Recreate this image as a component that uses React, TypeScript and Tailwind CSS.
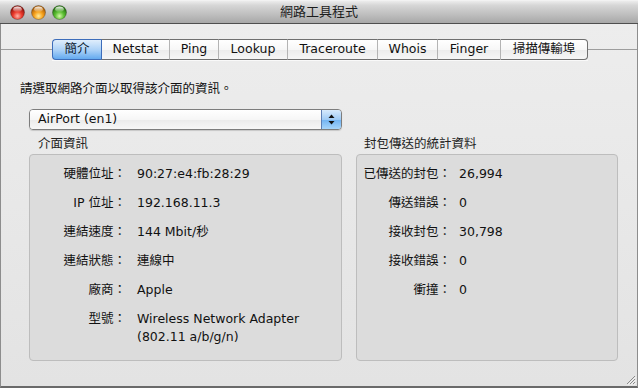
import React from "react";

const tabs = [
  { label: "簡介", w: "w-[49px]" },
  { label: "Netstat", w: "w-[68px]" },
  { label: "Ping", w: "w-[49px]" },
  { label: "Lookup", w: "w-[69px]" },
  { label: "Traceroute", w: "w-[90px]" },
  { label: "Whois", w: "w-[60px]" },
  { label: "Finger", w: "w-[63px]" },
  { label: "掃描傳輸埠", w: "w-[88px]" },
];

const ifaceRows: [string, string[]][] = [
  ["硬體位址：", ["90:27:e4:fb:28:29"]],
  ["IP 位址：", ["192.168.11.3"]],
  ["連結速度：", ["144 Mbit/秒"]],
  ["連結狀態：", ["連線中"]],
  ["廠商：", ["Apple"]],
  ["型號：", ["Wireless Network Adapter", "(802.11 a/b/g/n)"]],
];

const statRows: [string, string][] = [
  ["已傳送的封包：", "26,994"],
  ["傳送錯誤：", "0"],
  ["接收封包：", "30,798"],
  ["接收錯誤：", "0"],
  ["衝撞：", "0"],
];

function Light({ id, hi, mid, lo }: { id: string; hi: string; mid: string; lo: string }) {
  return (
    <svg width="15" height="15" viewBox="0 0 15 15">
      <defs>
        <radialGradient id={id} cx="50%" cy="75%" r="62%">
          <stop offset="0%" stopColor={hi} />
          <stop offset="50%" stopColor={mid} />
          <stop offset="100%" stopColor={lo} />
        </radialGradient>
        <linearGradient id={id + "h"} x1="0" y1="0" x2="0" y2="1">
          <stop offset="0%" stopColor="#fff" stopOpacity="0.95" />
          <stop offset="100%" stopColor="#fff" stopOpacity="0.05" />
        </linearGradient>
      </defs>
      <circle cx="7.5" cy="7.5" r="7" fill={`url(#${id})`} stroke="#00000066" strokeWidth="0.6" />
      <ellipse cx="7.5" cy="4.2" rx="4.3" ry="2.8" fill={`url(#${id}h)`} />
    </svg>
  );
}

function Segmented() {
  return (
    <div className="flex h-[21px] shadow-[0_1px_0_rgba(255,255,255,0.7)]">
      {tabs.map((t, i) => {
        const sel = i === 0;
        const last = i === tabs.length - 1;
        return (
          <div
            key={t.label}
            className={`${t.w} flex items-center justify-center text-[12.5px] leading-none border-y ${
              sel
                ? "border-[#3d6dba] border-l rounded-l-[4px] bg-[linear-gradient(to_bottom,#e0eefc,#a9d0f7_55%,#64aaf0)] text-[#0d1a2e]"
                : "border-[#6f6f6f] bg-[linear-gradient(to_bottom,#ffffff,#f7f7f7_50%,#ececec_52%,#f6f6f6)] text-[#111]"
            } ${i === 1 ? "border-l border-l-[#3d6dba]" : ""} ${i > 1 ? "border-l border-l-[#b4b4b4]" : ""} ${
              last ? "border-r rounded-r-[4px]" : ""
            }`}
          >
            {t.label}
          </div>
        );
      })}
    </div>
  );
}

export default function App() {
  return (
    <div className="w-[638px] h-[388px] flex flex-col overflow-hidden font-['DejaVu_Sans','Noto_Sans_CJK_TC',sans-serif] text-[#111] bg-[#e8e8e8]">
      {/* title bar */}
      <div className="h-[24px] shrink-0 flex items-center border-b border-[#4f4f4f] bg-[linear-gradient(to_bottom,#ececec,#d6d6d6_20%,#a8a8a8)] border-t border-t-[#f2f2f2]">
        <div className="flex items-center gap-[6px] pl-[10px]">
          <Light id="r" hi="#ffb4a8" mid="#ec3a2c" lo="#961710" />
          <Light id="o" hi="#ffec9c" mid="#f7a21c" lo="#b0620a" />
          <Light id="g" hi="#d5f8a8" mid="#5cbf33" lo="#2a7a14" />
        </div>
        <div className="flex-1 text-center text-[13px] text-[#1c1c1c] pr-[67px]">網路工具程式</div>
      </div>

      {/* body */}
      <div className="flex-1 flex flex-col border-l border-r border-b-2 border-[#8d8d8d] border-b-[#6a6a6a] bg-[linear-gradient(to_bottom,#ededed,#e3e3e3)]">
        <div className="flex items-center mt-[15px]">
          <div className="w-[51px] h-px bg-[#9d9d9d]" />
          <Segmented />
          <div className="flex-1 h-px bg-[#9d9d9d]" />
        </div>

        <div className="pl-[19px] mt-[21px] text-[12.5px] leading-[16px]">請選取網路介面以取得該介面的資訊。</div>

        {/* popup */}
        <div className="ml-[28px] mt-[12px] w-[313px] h-[21px] flex rounded-[4px] border border-[#7d7d7d] overflow-hidden shadow-[0_1px_1px_rgba(0,0,0,0.15)]">
          <div className="flex-1 flex items-center pl-[8px] text-[12.5px] bg-[linear-gradient(to_bottom,#ffffff,#f6f6f6_50%,#ebebeb_52%,#f7f7f7)]">
            AirPort (en1)
          </div>
          <div className="w-[20px] flex items-center justify-center border-l border-[#5d7fb5] bg-[linear-gradient(to_bottom,#d7eafc,#9fcbf6_50%,#71b3f2_52%,#a6d5fb)]">
            <svg width="7" height="11" viewBox="0 0 7 11">
              <path d="M3.5 0.5 L6.5 4 L0.5 4 Z" fill="#111" />
              <path d="M3.5 10.5 L6.5 7 L0.5 7 Z" fill="#111" />
            </svg>
          </div>
        </div>

        <div className="flex gap-[14px] ml-[28px] mt-[6px]">
          {/* left group */}
          <div className="w-[313px] flex flex-col">
            <div className="pl-[9px] text-[12.5px] leading-[16px] text-[#222] mb-[2px]">介面資訊</div>
            <div className="h-[207px] rounded-[4px] border border-[#bdbdbd] bg-[#dcdcdc] pt-[10px] grid grid-cols-[96px_1fr] gap-x-[11px] gap-y-[11px] content-start text-[12.5px] leading-[18px]">
              {ifaceRows.map(([k, v]) => (
                <React.Fragment key={k}>
                  <div className="text-right">{k}</div>
                  <div>
                    {v.map((line) => (
                      <div key={line}>{line}</div>
                    ))}
                  </div>
                </React.Fragment>
              ))}
            </div>
          </div>

          {/* right group */}
          <div className="w-[262px] flex flex-col">
            <div className="pl-[8px] text-[12.5px] leading-[16px] text-[#222] mb-[2px]">封包傳送的統計資料</div>
            <div className="h-[207px] rounded-[4px] border border-[#bdbdbd] bg-[#dcdcdc] pt-[10px] grid grid-cols-[94px_1fr] gap-x-[8px] gap-y-[11px] content-start text-[12.5px] leading-[18px]">
              {statRows.map(([k, v]) => (
                <React.Fragment key={k}>
                  <div className="text-right">{k}</div>
                  <div>{v}</div>
                </React.Fragment>
              ))}
            </div>
          </div>
        </div>

        <div className="flex-1 flex items-end justify-end pr-[1px] pb-[1px]">
          <svg width="11" height="11" viewBox="0 0 11 11">
            <path d="M10 2 L2 10 M10 5 L5 10 M10 8 L8 10" stroke="#8a8a8a" strokeWidth="1" />
            <path d="M11 2.8 L2.8 11 M11 5.8 L5.8 11 M11 8.8 L8.8 11" stroke="#fafafa" strokeWidth="0.8" />
          </svg>
        </div>
      </div>
    </div>
  );
}
